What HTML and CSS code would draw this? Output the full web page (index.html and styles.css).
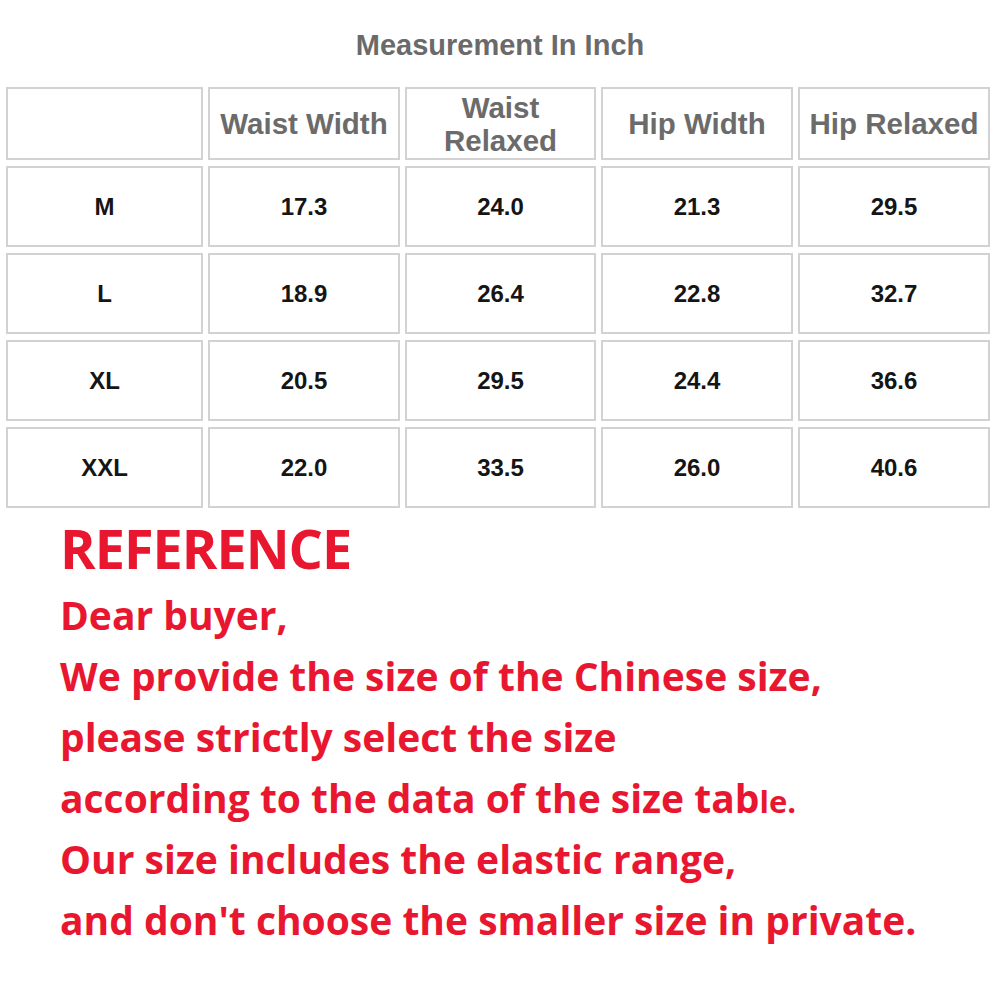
FILE: index.html
```html
<!DOCTYPE html>
<html>
<head>
<meta charset="utf-8">
<link rel="stylesheet" href="styles.css">
</head>
<body>
<div class="page">
  <h1 class="title">Measurement In Inch</h1>
  <div class="grid">
    <div class="cell head"></div>
    <div class="cell head">Waist Width</div>
    <div class="cell head">Waist<br>Relaxed</div>
    <div class="cell head">Hip Width</div>
    <div class="cell head">Hip Relaxed</div>

    <div class="cell">M</div><div class="cell">17.3</div><div class="cell">24.0</div><div class="cell">21.3</div><div class="cell">29.5</div>
    <div class="cell">L</div><div class="cell">18.9</div><div class="cell">26.4</div><div class="cell">22.8</div><div class="cell">32.7</div>
    <div class="cell">XL</div><div class="cell">20.5</div><div class="cell">29.5</div><div class="cell">24.4</div><div class="cell">36.6</div>
    <div class="cell">XXL</div><div class="cell">22.0</div><div class="cell">33.5</div><div class="cell">26.0</div><div class="cell">40.6</div>
  </div>
  <div class="note">
    <div class="ref">REFERENCE</div>
    <p>Dear buyer,</p>
    <p>We provide the size of the Chinese size,</p>
    <p>please strictly select the size</p>
    <p>according to the data of the size tab<span class="small">le.</span></p>
    <p>Our size includes the elastic range,</p>
    <p>and don't choose the smaller size in private.</p>
  </div>
</div>
</body>
</html>
```

FILE: styles.css
```css
html, body {
  margin: 0;
  padding: 0;
  background: #fff;
}
.page {
  width: 1000px;
  height: 1000px;
  overflow: hidden;
}
.title {
  margin: 0;
  padding-top: 28px;
  height: 87px;
  box-sizing: border-box;
  text-align: center;
  font-family: "Liberation Sans", Arial, sans-serif;
  font-weight: 700;
  font-size: 29px;
  line-height: 34px;
  color: #6a6a6a;
}
.grid {
  margin-left: 6px;
  display: grid;
  grid-template-columns: 197px 192px 191px 192px 192px;
  grid-template-rows: 73px 81px 81px 81px 81px;
  column-gap: 5px;
  row-gap: 6px;
}
.cell {
  border: 2px solid #d2d2d2;
  display: flex;
  align-items: center;
  justify-content: center;
  text-align: center;
  font-family: "Liberation Sans", Arial, sans-serif;
  font-weight: 700;
  font-size: 24px;
  color: #151515;
}
.cell.head {
  font-size: 29.5px;
  line-height: 33px;
  color: #6b6b6b;
}
.note {
  padding-left: 60px;
  margin-top: 4px;
  font-family: "Open Sans", "Noto Sans", sans-serif;
  font-weight: 700;
  color: #e8172f;
}
.ref {
  font-size: 54px;
  line-height: 72px;
  letter-spacing: -1px;
}
.note p {
  margin: 0;
  font-size: 39px;
  line-height: 61px;
  height: 61px;
}
.small {
  font-size: 31px;
  line-height: 0;
}
```
